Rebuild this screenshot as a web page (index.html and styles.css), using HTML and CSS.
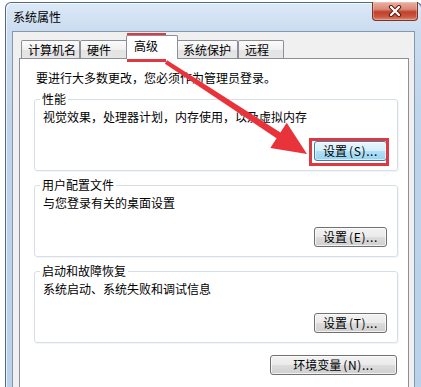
FILE: index.html
```html
<!DOCTYPE html>
<html lang="zh-CN">
<head>
<meta charset="utf-8">
<title>系统属性</title>
<link rel="stylesheet" href="styles.css">
</head>
<body>
<div class="window">
  <div class="titlebar">
    <span class="title">系统属性</span>
    <div class="close">
      <svg width="16" height="12" viewBox="0 0 16 12">
        <path d="M4 2 L12 10 M12 2 L4 10" stroke="#5a1d14" stroke-width="4.2" stroke-linecap="round" fill="none"/>
        <path d="M4 2 L12 10 M12 2 L4 10" stroke="#ffffff" stroke-width="2.2" stroke-linecap="round" fill="none"/>
      </svg>
    </div>
  </div>
  <div class="client">
    <div class="tabs">
      <div class="tab t-computer">计算机名</div>
      <div class="tab t-hardware">硬件</div>
      <div class="tab active t-advanced">高级</div>
      <div class="tab t-protect">系统保护</div>
      <div class="tab t-remote">远程</div>
    </div>
    <div class="panel">
      <p class="intro">要进行大多数更改，您必须作为管理员登录。</p>
      <fieldset class="group">
        <legend>性能</legend>
        <p class="desc">视觉效果，处理器计划，内存使用，以及虚拟内存</p>
        <div class="btn-row"><button class="btn focused">设置<span class="lat">(S)...</span></button></div>
      </fieldset>
      <fieldset class="group">
        <legend>用户配置文件</legend>
        <p class="desc">与您登录有关的桌面设置</p>
        <div class="btn-row"><button class="btn">设置<span class="lat">(E)...</span></button></div>
      </fieldset>
      <fieldset class="group">
        <legend>启动和故障恢复</legend>
        <p class="desc">系统启动、系统失败和调试信息</p>
        <div class="btn-row"><button class="btn">设置<span class="lat">(T)...</span></button></div>
      </fieldset>
      <div class="env-row"><button class="btn btn-env">环境变量<span class="lat">(N)...</span></button></div>
    </div>
  </div>
</div>
<svg class="annot" width="421" height="387" viewBox="0 0 421 387">
  <rect x="128.5" y="34.5" width="36" height="26" fill="none" stroke="#dc3a40" stroke-width="3"/>
  <rect x="310.5" y="139.5" width="77" height="25" fill="none" stroke="#dc3a40" stroke-width="3"/>
  <polygon points="167.1,60.3 280.4,132.5 286.7,122.8 307,154 270.3,148.0 276.6,138.3 164.9,63.7" fill="#e8333b"/>
</svg>
</body>
</html>
```

FILE: styles.css
```css
html, body {
  margin: 0;
  padding: 0;
}
body {
  width: 421px;
  height: 387px;
  overflow: hidden;
  position: relative;
  background: #ffffff;
  font-family: "Noto Sans CJK SC", "Noto Sans", sans-serif;
  font-size: 12px;
  color: #000;
}
.window {
  margin: 2px 0 0 5px;
  width: 417px;
  box-sizing: border-box;
  border: 1px solid #55697f;
  border-bottom: none;
  border-radius: 6px 6px 0 0;
  padding: 0 6px;
  background: linear-gradient(to bottom, #dce9f7 0, #cadcf0 28px, #bed4ec 120px, #b9d1ea 100%);
  box-shadow: inset 1px 1px 0 rgba(255,255,255,0.7);
}
.titlebar {
  display: flex;
  align-items: center;
  height: 28px;
  padding-left: 1px;
}
.title {
  line-height: 14px;
  color: #000;
}
.close {
  margin-left: auto;
  margin-right: -3px;
  align-self: flex-start;
  margin-top: -1px;
  width: 46px;
  height: 19px;
  box-sizing: border-box;
  border: 1px solid #7d3328;
  border-top: none;
  border-radius: 0 0 4px 4px;
  background: linear-gradient(to bottom, #eab0a2 0%, #d98a78 40%, #c2402c 55%, #c9553f 80%, #dc8a72 100%);
  box-shadow: inset 0 0 0 1px rgba(255,220,210,0.35);
  display: flex;
  align-items: center;
  justify-content: center;
}
.close svg {
  display: block;
}
.client {
  width: 403px;
  box-sizing: border-box;
  border: 1px solid #8796a8;
  border-bottom: none;
  background: #f0f0f0;
  padding: 3px 5px 0 6px;
}
.tabs {
  display: flex;
  align-items: flex-end;
  margin-left: 2px;
  position: relative;
  z-index: 1;
}
.tab {
  height: 18px;
  box-sizing: border-box;
  border: 1px solid #8c8f98;
  border-bottom: none;
  border-radius: 2px 2px 0 0;
  padding: 2px 0 0 6px;
  line-height: 14px;
  white-space: nowrap;
  background: linear-gradient(to bottom, #fbfbfb 0%, #f0f0f0 50%, #e3e3e3 51%, #e6e6e6 100%);
}
.tab.active {
  height: 24px;
  margin: 0 -2px -1px -2px;
  padding: 3px 0 0 7px;
  background: #ffffff;
  position: relative;
  z-index: 2;
}
.t-computer { width: 59px; }
.t-hardware { width: 48px; }
.t-advanced { width: 52px; }
.t-protect { width: 62px; }
.t-remote { width: 46px; }
.panel {
  width: 390px;
  box-sizing: border-box;
  border: 1px solid #8c8f98;
  border-bottom: none;
  background: #ffffff;
  padding: 11px 10px 30px 14px;
}
.intro {
  margin: 0;
  padding-left: 2px;
  line-height: 16px;
}
.group {
  margin: 6px 0 0;
  border: 1px solid #d5dfe5;
  border-radius: 3px;
  padding: 0 10px 9px 8px;
  min-width: 0;
  box-shadow: 1px 1px 0 #f3f5f7;
}
.group + .group {
  margin-top: 7px;
}
.group legend {
  padding: 0 2px;
  margin-left: -3px;
  line-height: 14px;
}
.desc {
  margin: 3px 0 0;
  line-height: 16px;
}
.btn-row {
  display: flex;
  justify-content: flex-end;
  margin-top: 16px;
}
.btn {
  width: 73px;
  height: 20px;
  box-sizing: border-box;
  padding: 0;
  margin: 0;
  font: inherit;
  line-height: 16px;
  color: #000;
  border: 1px solid #707070;
  border-radius: 3px;
  background: linear-gradient(to bottom, #f2f2f2 0%, #ebebeb 50%, #dddddd 51%, #cfcfcf 100%);
  box-shadow: inset 0 0 0 1px rgba(255,255,255,0.7);
  text-align: center;
}
.btn .lat {
  letter-spacing: 0.6px;
  margin-left: 2px;
}
.btn.focused {
  border-color: #3c7fb1;
  background: linear-gradient(to bottom, #e8f6fd 0%, #d4eefb 50%, #b2e0f8 51%, #96d3f2 100%);
  box-shadow: inset 0 0 0 1px rgba(255,255,255,0.55);
}
.env-row {
  display: flex;
  justify-content: flex-end;
  margin-top: 12px;
  padding-right: 1px;
}
.btn-env {
  width: 127px;
}
.annot {
  position: absolute;
  left: 0;
  top: 0;
  pointer-events: none;
}
```
